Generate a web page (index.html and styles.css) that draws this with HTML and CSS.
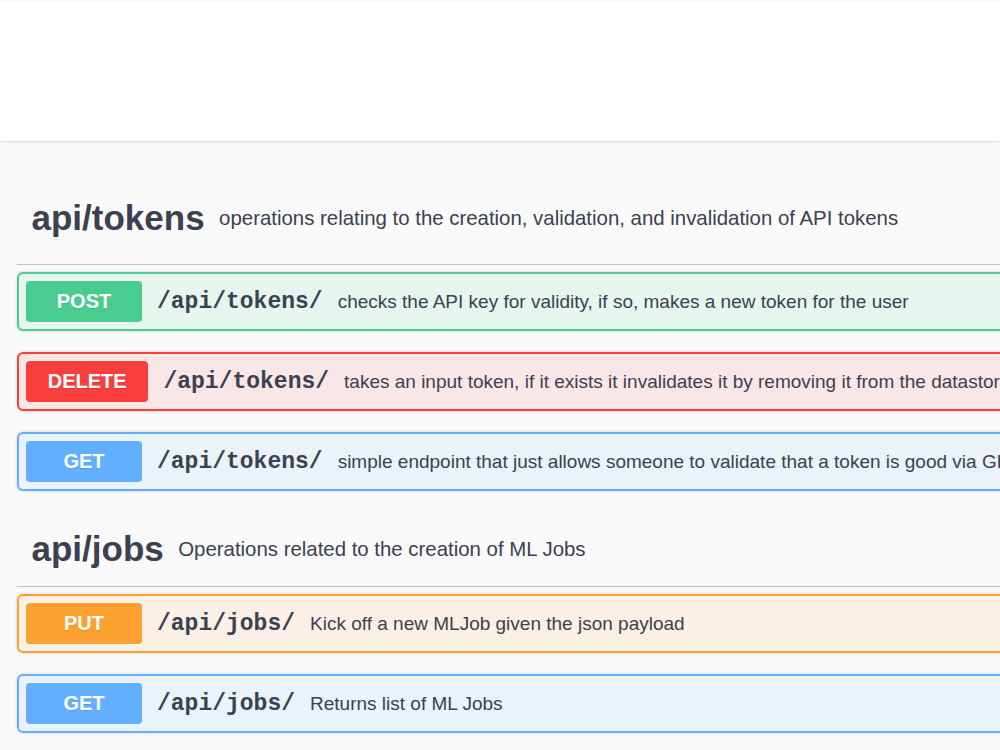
FILE: index.html
```html
<!DOCTYPE html>
<html lang="en">
<head>
    <meta charset="UTF-8">
    <meta name="viewport" content="width=device-width, initial-scale=1.0">
    <title>API</title>
    <link rel="stylesheet" href="styles.css">
</head>
<body>
    <div class="topbar"></div>
    <div class="wrapper">
        <div class="tag-section">
            <h3 class="tag tag-first">
                <span class="tag-name">api/tokens</span>
                <small class="tag-desc">operations relating to the creation, validation, and invalidation of API tokens</small>
            </h3>
            <div class="opblock opblock-post">
                <span class="method">POST</span>
                <span class="path">/api/tokens/</span>
                <span class="desc">checks the API key for validity, if so, makes a new token for the user</span>
            </div>
            <div class="opblock opblock-delete">
                <span class="method">DELETE</span>
                <span class="path">/api/tokens/</span>
                <span class="desc">takes an input token, if it exists it invalidates it by removing it from the datastore</span>
            </div>
            <div class="opblock opblock-get">
                <span class="method">GET</span>
                <span class="path">/api/tokens/</span>
                <span class="desc">simple endpoint that just allows someone to validate that a token is good via GET</span>
            </div>
        </div>
        <div class="tag-section">
            <h3 class="tag">
                <span class="tag-name">api/jobs</span>
                <small class="tag-desc">Operations related to the creation of ML Jobs</small>
            </h3>
            <div class="opblock opblock-put">
                <span class="method">PUT</span>
                <span class="path">/api/jobs/</span>
                <span class="desc">Kick off a new MLJob given the json payload</span>
            </div>
            <div class="opblock opblock-get">
                <span class="method">GET</span>
                <span class="path">/api/jobs/</span>
                <span class="desc">Returns list of ML Jobs</span>
            </div>
        </div>
    </div>
</body>
</html>
```

FILE: styles.css
```css
* {
    box-sizing: border-box;
}

body {
    margin: 0;
    background-color: #fafafa;
    font-family: "Liberation Sans", Arial, sans-serif;
    color: #3b4151;
    overflow: hidden;
}

.topbar {
    height: 141px;
    background-color: #fff;
    box-shadow: 0 1px 2px rgba(0, 0, 0, 0.15), inset 0 2px 2px -1px rgba(0, 0, 0, 0.04);
}

.wrapper {
    width: 1400px;
    padding: 40px 0 0 17px;
}

.tag {
    display: flex;
    align-items: center;
    margin: 0 0 7px;
    padding: 15px 29px 15px 14.5px;
    border-bottom: 1px solid rgba(59, 65, 81, 0.3);
    font-weight: normal;
    white-space: nowrap;
}

.tag-first {
    padding-bottom: 24px;
}

.tag-name {
    font-size: 35px;
    line-height: 44px;
    font-weight: bold;
}

.tag-desc {
    padding: 0 14.5px;
    font-size: 20.4px;
}

.opblock {
    display: flex;
    align-items: center;
    margin-bottom: 21px;
    padding: 7px;
    border: 2px solid;
    border-radius: 6px;
    box-shadow: 0 0 3px rgba(0, 0, 0, 0.19);
    white-space: nowrap;
}

.method {
    min-width: 116px;
    padding: 9px 21.75px;
    border-radius: 4px;
    font-size: 20px;
    line-height: 23px;
    font-weight: bold;
    text-align: center;
    color: #fff;
    text-shadow: 0 1px 0 rgba(0, 0, 0, 0.1);
}

.path {
    padding: 0 15px;
    font-family: "Liberation Mono", "Courier New", monospace;
    font-size: 23px;
    font-weight: bold;
}

.desc {
    font-size: 19px;
}

.opblock-post {
    border-color: #49cc90;
    background-color: rgba(73, 204, 144, 0.1);
}

.opblock-post .method {
    background-color: #49cc90;
}

.opblock-delete {
    border-color: #f93e3e;
    background-color: rgba(249, 62, 62, 0.1);
}

.opblock-delete .method {
    background-color: #f93e3e;
}

.opblock-get {
    border-color: #61affe;
    background-color: rgba(97, 175, 254, 0.1);
}

.opblock-get .method {
    background-color: #61affe;
}

.opblock-put {
    border-color: #fca130;
    background-color: rgba(252, 161, 48, 0.1);
}

.opblock-put .method {
    background-color: #fca130;
}
```
